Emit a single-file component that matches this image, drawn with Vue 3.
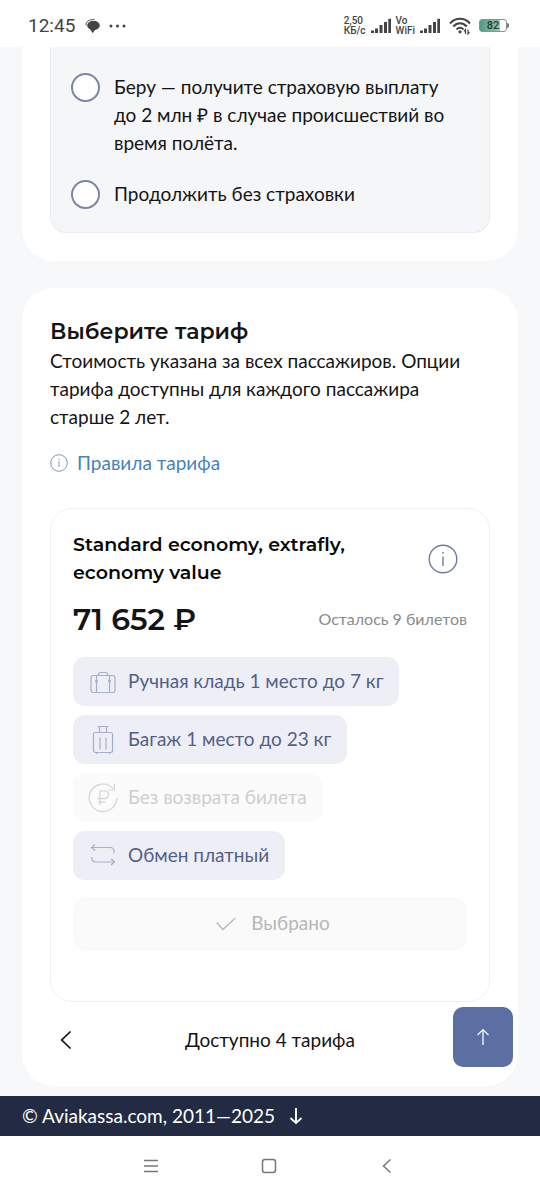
<script setup>
import { ref } from 'vue'

const insurance = ref('')
const choices = [
  { id: 'take', label: 'Беру — получите страховую выплату до 2 млн ₽ в случае происшествий во время полёта.' },
  { id: 'skip', label: 'Продолжить без страховки' }
]
const options = [
  { icon: 'bag', label: 'Ручная кладь 1 место до 7 кг' },
  { icon: 'suitcase', label: 'Багаж 1 место до 23 кг' },
  { icon: 'refund', label: 'Без возврата билета', off: true },
  { icon: 'exchange', label: 'Обмен платный' }
]
</script>

<template>
  <div class="page">
    <header class="status">
      <span class="clock">12:45</span>
      <svg class="chat" width="16" height="16" viewBox="0 0 16 16">
        <path d="M5 11L7.800 15.200L10.500 11z" fill="#444" />
        <ellipse cx="8.500" cy="7.500" rx="6.300" ry="4.700" fill="#444" />
        <path d="M1 7.500C.7 3.600 3.800 1.500 9.500 1.300" fill="none" stroke="#555" stroke-width="1" />
      </svg>
      <svg class="dots" width="18" height="4" viewBox="0 0 18 4" fill="#444">
        <circle cx="2" cy="2" r="1.5" /><circle cx="8.5" cy="2" r="1.5" /><circle cx="15" cy="2" r="1.5" />
      </svg>
      <div class="indicators">
        <span class="tiny"><span>2,50</span><span>КБ/с</span></span>
        <svg width="22" height="16" viewBox="0 0 22 16" fill="#444">
          <path d="M1 12.500h3V15H1zM5 10.500h3V15H5zM9.500 7h3v8h-3zM14 4h3v11h-3zM18.300 .8h2.700V15h-2.700z" />
        </svg>
        <span class="tiny"><span>Vo</span><span>WiFi</span></span>
        <svg width="22" height="16" viewBox="0 0 22 16" fill="#444">
          <path d="M1 12.500h3V15H1zM5 10.500h3V15H5zM9.500 7h3v8h-3zM14 4h3v11h-3zM18.300 .8h2.700V15h-2.700z" />
        </svg>
        <svg class="wifi" width="22" height="18" viewBox="0 0 22 18" fill="none" stroke="#444" stroke-width="2">
          <path d="M1 6.500C6.500 .3 15.500 .3 21 6.500M4.300 9.500c3.900-4.200 9.500-4.200 13.400 0M7.500 12.500c2.200-2.200 4.800-2.200 7 0" />
          <circle cx="11" cy="14.800" r="1.600" fill="#444" stroke="none" />
          <path d="M16.500 17v-4.500l-1.500 2M19 12.500V17l1.500-2" stroke-width="1.200" />
        </svg>
        <span class="battery">82</span>
        <span class="nub"></span>
      </div>
    </header>

    <main>
      <section class="panel insurance">
        <fieldset class="choices">
          <label v-for="c in choices" :key="c.id" class="choice">
            <input v-model="insurance" type="radio" name="insurance" :value="c.id" />
            <span>{{ c.label }}</span>
          </label>
        </fieldset>
      </section>

      <section class="panel fares">
        <h2>Выберите тариф</h2>
        <p class="lead">Стоимость указана за всех пассажиров. Опции тарифа доступны для каждого пассажира старше 2 лет.</p>
        <a class="rules" href="#rules">
          <svg width="18" height="18" viewBox="0 0 18 18" fill="none" stroke="#8199b5">
            <circle cx="9" cy="9" r="8.300" /><path d="M9 7.500V13M9 4.800v1.400" />
          </svg>
          <span>Правила тарифа</span>
        </a>

        <article class="fare">
          <div class="fare-head">
            <h3>Standard economy, extrafly, economy value</h3>
            <button class="info" type="button" aria-label="Информация о тарифе">
              <svg width="30" height="30" viewBox="0 0 30 30" fill="none" stroke="#707d9b">
                <circle cx="15" cy="15" r="13.800" stroke-width="1.400" />
                <path d="M15 12.500V22M15 8v1.800" stroke-width="1.400" />
              </svg>
            </button>
          </div>
          <div class="price-row">
            <strong>71 652 ₽</strong>
            <span>Осталось 9 билетов</span>
          </div>
          <ul class="options">
            <li v-for="o in options" :key="o.icon" :class="{ off: o.off }">
              <svg width="30" height="30" viewBox="0 0 30 30" fill="none" stroke="currentColor" stroke-width="1.200">
                <g v-if="o.icon === 'bag'">
                  <rect x="3" y="8.500" width="24" height="17" rx="2.500" />
                  <path d="M10.500 8.500V7.500q0-2 2-2h5q2 0 2 2v1M8.500 8.500v17M21.500 8.500v17M7 13.500h3M20 13.500h3M7 15h3M20 15h3" />
                </g>
                <g v-else-if="o.icon === 'suitcase'">
                  <rect x="5.500" y="7.500" width="19" height="20" rx="2" />
                  <path d="M9.500 1.500h11M11.500 1.500v6M18.500 1.500v6M12 12.500v12M18 12.500v12M8.500 27.500v1.500M21.500 27.500v1.500" />
                </g>
                <g v-else-if="o.icon === 'refund'">
                  <path d="M25 5.300A13.800 13.800 0 1 0 28.800 15M26.500 1v6h-6M12 22V8h4.500q4 0 4 3.800t-4 3.800H9.500M9.500 19h8" />
                </g>
                <g v-else>
                  <path d="M7 3.500L3.500 6.500L7 9.500M3.500 6.500H22q4 0 4 4v2M23 18l3.500 3L23 24M26.500 21H8q-4.500 0-4.500-5" />
                </g>
              </svg>
              <span>{{ o.label }}</span>
            </li>
          </ul>
          <button class="chosen" type="button" disabled>
            <svg width="20" height="14" viewBox="0 0 20 14" fill="none" stroke="currentColor" stroke-width="1.300">
              <path d="M.7 5.500L7 12.500L19.300 1" />
            </svg>
            <span>Выбрано</span>
          </button>
        </article>

        <nav class="pager">
          <button type="button" aria-label="Предыдущий тариф">
            <svg width="12" height="20" viewBox="0 0 12 20" fill="none" stroke="#111" stroke-width="1.700">
              <path d="M10.500 1.500L1.700 10l8.800 8.500" />
            </svg>
          </button>
          <span>Доступно 4 тарифа</span>
        </nav>
      </section>
    </main>

    <button class="to-top" type="button" aria-label="Наверх">
      <svg width="14" height="18" viewBox="0 0 14 18" fill="none" stroke="#e4e9f6" stroke-width="1.500">
        <path d="M7 17V2M1.500 7L7 1.700L12.500 7" />
      </svg>
    </button>

    <footer class="copyright">
      <span>© Aviakassa.com, 2011—2025</span>
      <svg width="14" height="18" viewBox="0 0 14 18" fill="none" stroke="#fff" stroke-width="1.900">
        <path d="M7 1v15M1.500 11L7 16l5.500-5" />
      </svg>
    </footer>

    <nav class="system">
      <button type="button" aria-label="Недавние приложения">
        <svg width="16" height="14" viewBox="0 0 16 14" stroke="#777" stroke-width="1.500"><path d="M1 1.500h14M1 7h14M1 12.500h14" /></svg>
      </button>
      <button type="button" aria-label="Домой">
        <svg width="16" height="16" viewBox="0 0 16 16" fill="none" stroke="#777" stroke-width="1.500"><rect x="1.500" y="1.500" width="13" height="13" rx="2.500" /></svg>
      </button>
      <button type="button" aria-label="Назад">
        <svg width="16" height="16" viewBox="0 0 16 16" fill="none" stroke="#777" stroke-width="1.500"><path d="M11.500 1.500L4.500 8l7 6.500" /></svg>
      </button>
    </nav>
  </div>
</template>

<style>
body {
  margin: 0;
}
</style>

<style scoped>
.page {
  display: flex;
  flex-direction: column;
  min-height: 100vh;
  background: #f6f8fa;
  color: #141414;
  font: 19px/28px Lato, "Open Sans", sans-serif;
}
.page * {
  box-sizing: border-box;
}
button {
  display: flex;
  align-items: center;
  justify-content: center;
  margin: 0;
  padding: 0;
  border: 0;
  background: none;
  font: inherit;
  color: inherit;
}
svg {
  flex: none;
  display: block;
}
.status {
  display: flex;
  align-items: center;
  height: 47px;
  padding: 4px 31px 0 28px;
  background: #fff;
  color: #444;
  font-family: Roboto, sans-serif;
}
.clock {
  font-size: 19px;
}
.chat {
  margin-left: 10px;
}
.dots {
  margin-left: 8px;
}
.indicators {
  display: flex;
  align-items: center;
  gap: 4px;
  margin-left: auto;
}
.tiny {
  display: flex;
  flex-direction: column;
  font: 500 10px/10px Roboto, sans-serif;
}
.wifi {
  margin: 0 4px;
}
.battery {
  width: 28px;
  height: 13px;
  border: 1px solid #8a938f;
  border-radius: 3px;
  background: linear-gradient(90deg, #4f9b88, #9dc9a9 78%, #fff 78%);
  color: #243c36;
  font: 500 11px/11px Roboto, sans-serif;
  text-align: center;
}
.nub {
  width: 2px;
  height: 5px;
  margin-left: -4px;
  border-radius: 0 2px 2px 0;
  background: #777;
}
main {
  display: flex;
  flex-direction: column;
  gap: 27px;
  padding: 0 22px 10px;
}
.panel {
  padding: 28px;
  border-radius: 32px;
  background: #fff;
}
.insurance {
  padding-top: 0;
  border-radius: 0 0 32px 32px;
}
.fares {
  padding-top: 29px;
  padding-bottom: 32px;
}
.choices {
  display: flex;
  flex-direction: column;
  gap: 23px;
  margin: 0;
  padding: 26px 32px 23px 20px;
  border: 1px solid #eaecf2;
  border-top: 0;
  border-radius: 0 0 16px 16px;
  background: #f4f6f8;
}
.choice {
  display: flex;
  align-items: flex-start;
  gap: 14px;
}
input {
  flex: none;
  appearance: none;
  width: 29px;
  height: 29px;
  margin: 0;
  border: 2px solid #7d86a4;
  border-radius: 50%;
  background: #fff;
}
input:checked {
  border-width: 9px;
}
h2,
h3,
p,
ul {
  margin: 0;
  padding: 0;
}
h2 {
  font: 600 22px/30px Montserrat, "Open Sans", sans-serif;
}
.lead {
  padding-right: 20px;
}
.rules {
  display: inline-flex;
  align-items: center;
  gap: 9px;
  margin-top: 18px;
  color: #4583bb;
  text-decoration: none;
}
.fare {
  margin-top: 29px;
  padding: 22px 22px 50px;
  border: 1px solid #f0f1f3;
  border-radius: 22px;
}
.fare-head {
  display: flex;
  align-items: center;
  justify-content: space-between;
  gap: 24px;
  padding-right: 9px;
}
h3 {
  max-width: 300px;
  font: 600 19px/28px Montserrat, "Open Sans", sans-serif;
  color: #080808;
}
.price-row {
  display: flex;
  align-items: center;
  justify-content: space-between;
  margin-top: 13px;
}
.price-row strong {
  font: 600 30px/40px Montserrat, "Open Sans", sans-serif;
}
.price-row span {
  padding-bottom: 2px;
  color: #8b8b8b;
  font-size: 16px;
}
.options {
  display: flex;
  flex-direction: column;
  align-items: flex-start;
  gap: 9px;
  margin-top: 17px;
  list-style: none;
}
.options li {
  display: flex;
  align-items: center;
  gap: 10px;
  height: 49px;
  padding: 0 16px 0 15px;
  border-radius: 12px;
  background: #eeeff6;
  color: #535f88;
}
.options span,
.chosen span {
  padding-bottom: 2px;
}
.options svg {
  color: #a7aeca;
}
.options .off {
  background: #fbfbfb;
  color: #cecece;
}
.options .off svg {
  color: #d2d2d2;
}
.chosen {
  gap: 15px;
  width: 100%;
  height: 54px;
  margin-top: 17px;
  padding-left: 6px;
  border-radius: 14px;
  background: #fafafa;
  color: #b6b6b6;
}
.pager {
  display: grid;
  grid-template-columns: 32px 1fr 32px;
  align-items: center;
  margin-top: 24px;
  text-align: center;
}
.pager button {
  height: 28px;
}
.to-top {
  position: fixed;
  right: 27px;
  bottom: 133px;
  width: 60px;
  height: 60px;
  border-radius: 10px;
  background: #5b6fa3;
}
.copyright {
  display: flex;
  align-items: center;
  gap: 14px;
  height: 40px;
  padding: 0 22px;
  background: #232b43;
  color: #fff;
}
.system {
  display: flex;
  flex: 1;
  align-items: center;
  justify-content: center;
  gap: 70px;
  min-height: 60px;
  padding: 0 2px 4px 0;
  background: #fff;
}
.system button {
  width: 48px;
  height: 48px;
}
</style>
